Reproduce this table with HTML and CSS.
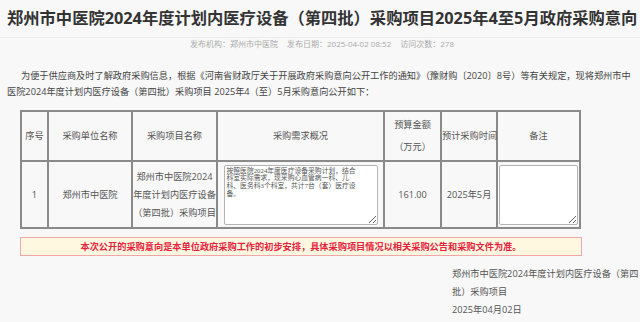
FILE: index.html
```html
<!DOCTYPE html>
<html lang="zh-CN">
<head>
<meta charset="utf-8">
<title>郑州市中医院2024年度计划内医疗设备（第四批）采购项目2025年4至5月政府采购意向</title>
<link rel="stylesheet" href="styles.css">
</head>
<body>
<div class="page">
  <h1 class="title">郑州市中医院2024年度计划内医疗设备（第四批）采购项目2025年4至5月政府采购意向</h1>
  <div class="meta">
    <span>发布机构：郑州市中医院</span>
    <span>发布日期：2025-04-02 08:52</span>
    <span>访问次数：278</span>
  </div>
  <div class="content">
    <p class="intro">为便于供应商及时了解政府采购信息，根据《河南省财政厅关于开展政府采购意向公开工作的通知》（豫财购〔2020〕8号）等有关规定，现将郑州市中医院2024年度计划内医疗设备（第四批）采购项目 2025年4（至）5月采购意向公开如下：</p>
    <table class="plan">
      <colgroup>
        <col class="c-no">
        <col class="c-unit">
        <col class="c-proj">
        <col class="c-req">
        <col class="c-budget">
        <col class="c-time">
        <col class="c-note">
      </colgroup>
      <thead>
        <tr>
          <th>序号</th>
          <th>采购单位名称</th>
          <th>采购项目名称</th>
          <th>采购需求概况</th>
          <th><span class="two">预算金额<br>（万元）</span></th>
          <th class="nowrap">预计采购时间</th>
          <th>备注</th>
        </tr>
      </thead>
      <tbody>
        <tr>
          <td>1</td>
          <td>郑州市中医院</td>
          <td class="proj">郑州市中医院2024年度计划内医疗设备（第四批）采购项目</td>
          <td><textarea class="req" readonly>按照医院2024年度医疗设备采购计划，结合
科室实际需求，现采购心血管病一科、儿
科、医务科3个科室，共计7台（套）医疗设
备。</textarea></td>
          <td>161.00</td>
          <td>2025年5月</td>
          <td><textarea class="note" readonly></textarea></td>
        </tr>
      </tbody>
    </table>
    <div class="notice">本次公开的采购意向是本单位政府采购工作的初步安排，具体采购项目情况以相关采购公告和采购文件为准。</div>
    <div class="sign">
      <p class="sign-name">郑州市中医院2024年度计划内医疗设备（第四批）采购项目</p>
      <p class="sign-date">2025年04月02日</p>
    </div>
  </div>
</div>
</body>
</html>
```

FILE: styles.css
```css
* { box-sizing: border-box; }
html, body { margin: 0; padding: 0; }
body {
  background: #f8f8f8;
  font-family: "Open Sans", "Noto Sans CJK SC", sans-serif;
  color: #444;
  overflow: hidden;
}
.page { width: 640px; }
.title {
  margin: 0;
  padding: 7px 0 8px 7px;
  font-size: 16.3px;
  line-height: 22px;
  font-weight: 700;
  color: #333;
  white-space: nowrap;
  border-bottom: 1px solid #ececec;
}
.meta {
  display: flex;
  justify-content: center;
  gap: 9px;
  font-size: 8px;
  line-height: 12px;
  color: #aaa;
  padding-left: 4px;
}
.content { padding: 0 2px 0 7px; }
.intro {
  margin: 18px 0 10px;
  font-size: 9.2px;
  line-height: 16px;
  text-indent: 14px;
  color: #444;
}
.plan {
  margin-left: 13px;
  width: 561px;
  table-layout: fixed;
  border-collapse: separate;
  border-spacing: 0;
  border: 1px solid #8a8a8a;
  font-size: 9.2px;
  color: #555;
}
.c-no { width: 27px; }
.c-unit { width: 84px; }
.c-proj { width: 85px; }
.c-req { width: 167px; }
.c-budget { width: 57px; }
.c-time { width: 56px; }
.c-note { width: 83px; }
.plan th, .plan td {
  border: 1px solid #8a8a8a;
  padding: 0;
  text-align: center;
  vertical-align: middle;
  font-weight: 400;
}
.plan th { height: 50px; line-height: 22px; }
.plan td { height: 67px; line-height: 18px; }
.two { display: block; }
.nowrap { white-space: nowrap; }
.plan textarea {
  display: block;
  margin: 0 auto;
  height: 60px;
  background: #fff;
  border: 1px solid #b4b4b4;
  border-radius: 2px;
  font-family: "Liberation Serif", "Noto Sans CJK SC", serif;
  font-size: 6.8px;
  line-height: 7.8px;
  color: #555;
  padding: 1px 2px;
  text-align: left;
  overflow: hidden;
  resize: both;
}
.req { width: 154px; }
.note { width: 79px; }
.notice {
  margin: 8px 0 0 13px;
  width: 562px;
  border: 1px solid #f2a6a8;
  background: #fff8e1;
  color: #e5223e;
  font-weight: 700;
  font-size: 9.2px;
  line-height: 17px;
  text-align: center;
}
.sign {
  display: flex;
  flex-direction: column;
  width: 198px;
  margin-left: 445px;
  margin-top: 9px;
  font-size: 9.2px;
  color: #555;
}
.sign p { margin: 0; }
.sign-name { line-height: 18px; }
.sign-date { margin-top: 3px; line-height: 18px; }
```
